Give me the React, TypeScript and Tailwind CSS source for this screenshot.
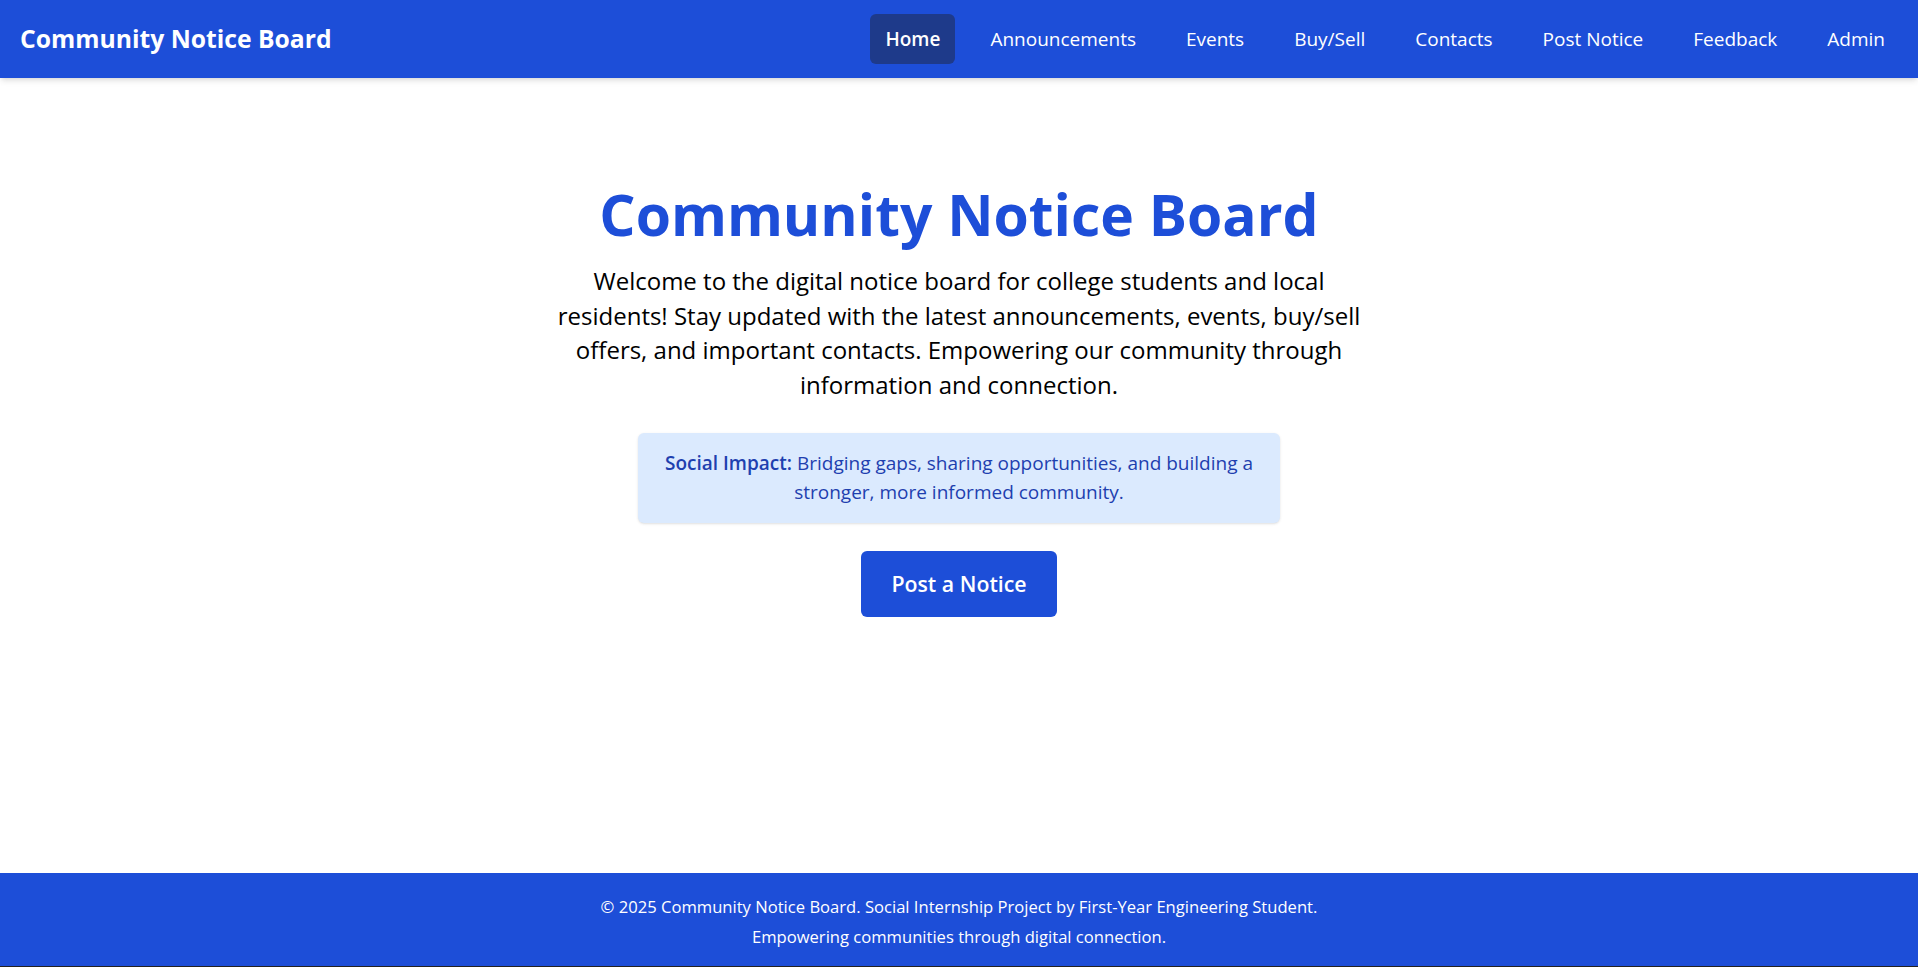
import React from 'react';

const navLinks = ['Home', 'Announcements', 'Events', 'Buy/Sell', 'Contacts', 'Post Notice', 'Feedback', 'Admin'];

const Header = () => {
  return (
    <header className="bg-[#1d4ed8] shadow-md flex items-center justify-between h-[78px] pl-5 pr-[18px]">
      <h1 className="text-white font-bold text-[24.7px]">Community Notice Board</h1>
      <nav className="flex items-center gap-5">
        {navLinks.map((link, index) => {
          return (
            <a
              key={index}
              href="#"
              className={
                index === 0
                  ? 'px-[15px] py-[10px] rounded-md bg-[#1e3a8a] text-white font-semibold text-[19px] leading-[30px]'
                  : 'px-[15px] py-[10px] rounded-md text-white text-[19px] leading-[30px]'
              }
            >
              {link}
            </a>
          );
        })}
      </nav>
    </header>
  );
};

const Hero = () => {
  return (
    <main className="flex-1 flex flex-col items-center text-center pt-[100px]">
      <h2 className="text-[57px] leading-[72px] font-bold text-[#1d4ed8]">Community Notice Board</h2>
      <p className="max-w-[820px] text-[24px] leading-[34.7px] text-black mt-[14px]">
        Welcome to the digital notice board for college students and local residents! Stay updated with the latest
        announcements, events, buy/sell offers, and important contacts. Empowering our community through information
        and connection.
      </p>
      <div className="w-[642px] mt-[30px] bg-[#dbeafe] rounded-md shadow-sm px-5 py-4 text-[19px] leading-[29px] text-[#1e40af]">
        <span className="font-semibold">Social Impact:</span> Bridging gaps, sharing opportunities, and building a
        stronger, more informed community.
      </div>
      <button className="mt-[28px] w-[196px] h-[66px] rounded-md bg-[#1d4ed8] text-white font-semibold text-[21.3px]">
        Post a Notice
      </button>
    </main>
  );
};

const Footer = () => {
  return (
    <footer className="bg-[#1d4ed8] h-[94px] pt-1 flex flex-col items-center justify-center text-white text-[16.6px] leading-[30px] border-b border-[#222]">
      <p>© 2025 Community Notice Board. Social Internship Project by First-Year Engineering Student.</p>
      <p>Empowering communities through digital connection.</p>
    </footer>
  );
};

export default function App() {
  return (
    <div className="min-h-screen flex flex-col bg-white font-['Open_Sans',sans-serif]">
      <Header />
      <Hero />
      <Footer />
    </div>
  );
}
